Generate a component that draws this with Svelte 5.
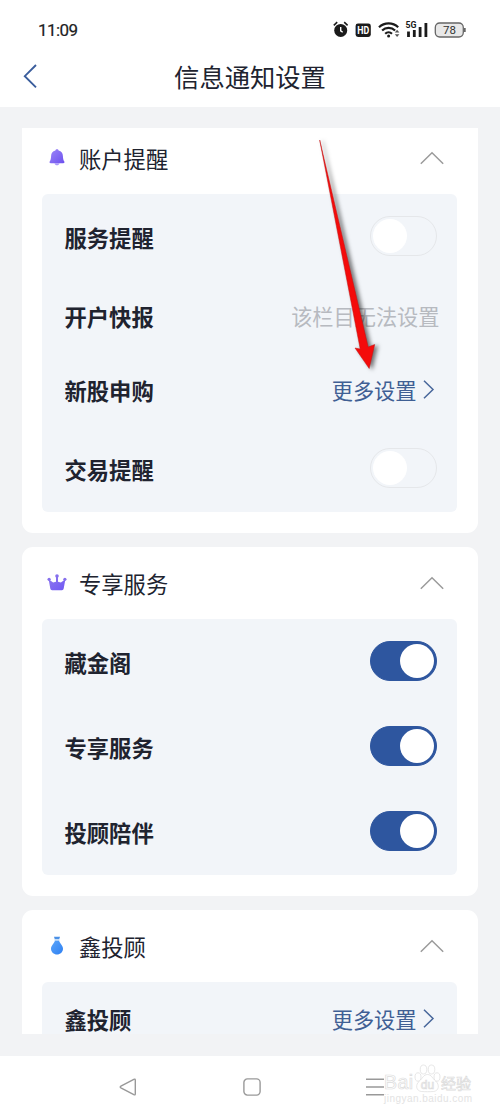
<script>
  const sections = [
    {
      icon: 'bell',
      title: '账户提醒',
      rows: [
        { label: '服务提醒', kind: 'toggle', on: false },
        { label: '开户快报', kind: 'locked' },
        { label: '新股申购', kind: 'more' },
        { label: '交易提醒', kind: 'toggle', on: false },
      ],
    },
    {
      icon: 'crown',
      title: '专享服务',
      rows: [
        { label: '藏金阁', kind: 'toggle', on: true },
        { label: '专享服务', kind: 'toggle', on: true },
        { label: '投顾陪伴', kind: 'toggle', on: true },
      ],
    },
    {
      icon: 'pouch',
      title: '鑫投顾',
      rows: [{ label: '鑫投顾', kind: 'more' }],
    },
  ];
</script>

<div class="screen">
  <div class="status">
    <span class="time">11:09</span>
    <svg class="indicators" width="136" height="24" viewBox="0 0 136 24">
      <g fill="#1b1b1b">
        <circle cx="8.7" cy="13.4" r="6.5" />
        <path d="M1.800 8.300 5.200 5.200M12.200 5.200l3.400 3.100" stroke="#1b1b1b" stroke-width="1.600" fill="none" />
        <path d="M8.700 10v3.800l2 1.400" stroke="#fff" stroke-width="1.400" fill="none" />
        <rect x="23.600" y="6.500" width="15.200" height="13.500" rx="2.400" />
      </g>
      <text x="31.200" y="17.200" text-anchor="middle" font-size="10.500" font-weight="700" textLength="12" lengthAdjust="spacingAndGlyphs" fill="#fff">HD</text>
      <g fill="none" stroke="#1b1b1b" stroke-width="2.200">
        <path d="M47 10.200a14 14 0 0 1 19.200 0" />
        <path d="M50.100 13.500a9.300 9.300 0 0 1 13 0" />
        <path d="M53.200 16.700a5 5 0 0 1 6.800 0" />
      </g>
      <circle cx="56.600" cy="19" r="1.500" fill="#1b1b1b" />
      <path d="M62.800 15.400l2.300-2.600 2.300 2.600zM62.800 17.300l2.300 2.600 2.300-2.600z" fill="#555" />
      <text x="73.500" y="11.300" font-size="9" font-weight="700" textLength="11" lengthAdjust="spacingAndGlyphs" fill="#1b1b1b">5G</text>
      <path d="M76.500 14.500V20M82.300 13v7M88.100 10v10M93.900 6v14" stroke="#1b1b1b" stroke-width="2.800" />
      <rect x="103.300" y="6" width="28" height="14" rx="4.400" fill="#e8e8e8" stroke="#666" stroke-width="1.300" />
      <path d="M132.800 11v4" stroke="#666" stroke-width="1.800" />
      <text x="117.400" y="17.300" text-anchor="middle" font-size="11.500" fill="#333">78</text>
    </svg>
  </div>

  <header>
    <svg class="back" width="16" height="26" viewBox="0 0 16 26" fill="none" stroke="#3a5d9c" stroke-width="1.900">
      <path d="M14 2 2.800 13.200 14 24.400" />
    </svg>
    <h1>信息通知设置</h1>
  </header>

  <main>
    <div class="scroll">
      {#each sections as section}
        <section class="card">
          <div class="head">
            {#if section.icon === 'bell'}
              <svg class="icon" width="20" height="20" viewBox="0 0 20 20">
                <defs>
                  <linearGradient id="bell" x1="0" y1="0" x2="1" y2="1">
                    <stop offset="0" stop-color="#9c86f8" />
                    <stop offset="1" stop-color="#6c50ee" />
                  </linearGradient>
                </defs>
                <path d="M10 1.300c.9 0 1.400.5 1.600 1.100 2.900.7 4.200 2.800 4.300 5.500.1 2.700.5 4.200 1.300 5.400.6 1 .2 2-1 2H3.800c-1.200 0-1.600-1-1-2 .8-1.200 1.200-2.700 1.300-5.400.1-2.700 1.400-4.800 4.300-5.500.2-.6.7-1.100 1.600-1.100z" fill="url(#bell)" />
                <path d="M7.500 15.300h5c-.4 1.400-1.300 2-2.500 2s-2.100-.6-2.500-2z" fill="#a998fa" />
              </svg>
            {:else if section.icon === 'crown'}
              <svg class="icon" width="20" height="20" viewBox="0 0 20 20">
                <defs>
                  <linearGradient id="crown" x1="0" y1="0" x2="1" y2="1">
                    <stop offset="0" stop-color="#8e78ee" />
                    <stop offset="1" stop-color="#7058f4" />
                  </linearGradient>
                </defs>
                <path d="M1.600 6.300 6.100 9.600 9 8.800V3.500h2v5.300l2.900.8 4.500-3.300-1.700 9.200q-.2 1.700-1.800 1.700H5.100q-1.600 0-1.800-1.700z" fill="url(#crown)" />
                <g fill="#8670ec">
                  <circle cx="10" cy="3" r="1.800" />
                  <circle cx="2.100" cy="6.300" r="1.600" />
                  <circle cx="17.900" cy="6.300" r="1.600" />
                </g>
              </svg>
            {:else}
              <svg class="icon" width="20" height="20" viewBox="0 0 20 20">
                <defs>
                  <linearGradient id="pouch" x1="0" y1="0" x2="1" y2="1">
                    <stop offset="0" stop-color="#5aa5fa" />
                    <stop offset="1" stop-color="#2f80f2" />
                  </linearGradient>
                </defs>
                <path d="M7 .8h6l-.8 2.500H7.800z" fill="#4b91e6" />
                <path d="M7.500 3.300h5v1.500h-5z" fill="#bcd9fb" />
                <path d="M8 4.700h4c.7 2.300 4 4.800 4 8 0 3.300-2.900 5.800-6 5.800s-6-2.500-6-5.800c0-3.200 3.300-5.700 4-8z" fill="url(#pouch)" />
              </svg>
            {/if}
            <h2>{section.title}</h2>
            <svg class="collapse" width="24" height="14" viewBox="0 0 24 14" fill="none" stroke="#9b9b9b" stroke-width="1.500">
              <path d="M.8 12.800 12 1.800l11.200 11" />
            </svg>
          </div>
          <div class="panel">
            {#each section.rows as row}
              <div class="row {row.kind}">
                <span class="label">{row.label}</span>
                {#if row.kind === 'toggle'}
                  <span class="switch" class:on={row.on}><i></i></span>
                {:else if row.kind === 'locked'}
                  <span class="note">该栏目无法设置</span>
                {:else}
                  <span class="link">
                    更多设置
                    <svg width="12" height="20" viewBox="0 0 12 20" fill="none" stroke="#48679b" stroke-width="1.500">
                      <path d="M1 1.700 10 10.500 1 19.300" />
                    </svg>
                  </span>
                {/if}
              </div>
            {/each}
          </div>
        </section>
      {/each}
    </div>
  </main>

  <nav>
    <svg width="18" height="18" viewBox="0 0 18 18"><path d="M1.900 8.200 14.800 1.300q1.500-.7 1.500 1v13.400q0 1.700-1.500 1L1.900 9.800q-1.400-.8 0-1.600z" /></svg>
    <svg width="18" height="18" viewBox="0 0 18 18"><rect x=".9" y=".9" width="16.200" height="16.200" rx="3.500" /></svg>
    <svg width="18" height="18" viewBox="0 0 18 18"><path d="M0 1.300h18M0 9h18M0 16.700h18" /></svg>
  </nav>

  <svg class="arrow" width="80" height="240" viewBox="0 0 80 240">
    <path d="M7.700 2 48.200 211 43 210 57.200 230.500 62.700 206.500 56.200 209z" fill="#f40b0b" stroke="#c01212" stroke-width=".5" />
  </svg>

  <svg class="watermark" width="96" height="48" viewBox="0 0 96 48">
    <g fill="#fff" stroke="#dcdcdc" stroke-width=".7">
      <text x="1" y="29" font-size="19.500" textLength="29">Bai</text>
      <ellipse cx="35" cy="17" rx="3" ry="4.200" />
      <ellipse cx="40.500" cy="9.500" rx="3.300" ry="4.500" />
      <ellipse cx="48.500" cy="9.500" rx="3.300" ry="4.500" />
      <ellipse cx="54" cy="17" rx="3" ry="4.200" />
      <path d="M44.500 14.500c4 0 5 4 8 6.500 4.500 3.500 3.500 10-2 10.500-3 .3-9 .3-12 0-5.500-.5-6.500-7-2-10.500 3-2.500 4-6.500 8-6.500z" />
      <text x="37.800" y="28.500" font-size="12">du</text>
      <text class="cjk" x="58" y="28.500" font-size="15">经验</text>
    </g>
    <text x="1" y="42" font-size="10" textLength="88" fill="#e3e3e3">jingyan.baidu.com</text>
  </svg>
</div>

<style>
  :global(body) {
    margin: 0;
  }
  .screen {
    position: relative;
    display: flex;
    flex-direction: column;
    width: 500px;
    height: 1118px;
    overflow: hidden;
    background: #fff;
    color: #20232f;
    font-family: 'Noto Sans CJK SC', sans-serif;
  }
  h1,
  h2 {
    margin: 0;
    font-weight: 400;
  }
  .status {
    display: flex;
    align-items: center;
    justify-content: space-between;
    box-sizing: border-box;
    height: 46px;
    padding: 14px 32px 0 38px;
    font-family: Roboto, sans-serif;
  }
  .time {
    font-size: 17px;
    letter-spacing: -0.6px;
    color: #1d1d1d;
    -webkit-text-stroke: 0.2px #1d1d1d;
  }
  .indicators {
    margin-top: -12px;
    transform: translateY(5px);
  }
  header {
    display: grid;
    grid-template-columns: 1fr auto 1fr;
    align-items: center;
    height: 61px;
    padding: 0 22px;
  }
  .back {
    margin-top: -2px;
  }
  h1 {
    margin-top: -2px;
    font-size: 25.3px;
    line-height: 58px;
  }
  main {
    box-sizing: border-box;
    height: 949px;
    padding: 21px 22px 22px;
    background: #f2f3f5;
  }
  .scroll {
    height: 906px;
    overflow: hidden;
  }
  .card {
    box-sizing: border-box;
    margin-bottom: 14.5px;
    padding: 0 21px 21px 20px;
    border-radius: 11px;
    background: #fff;
  }
  .card:first-child {
    margin-top: -6px;
    border-radius: 0 0 11px 11px;
  }
  .head {
    display: flex;
    align-items: center;
    height: 72px;
    padding: 0 13px 0 5px;
  }
  .icon {
    margin-right: 12px;
  }
  h2 {
    margin-top: -1px;
    font-size: 22.3px;
    line-height: 32px;
  }
  .collapse {
    margin-left: auto;
  }
  .panel {
    border-radius: 6px;
    background: #f2f5f9;
  }
  .row {
    display: flex;
    align-items: center;
    justify-content: space-between;
    height: 85.3px;
    padding: 0 20px 0 22.5px;
  }
  .row.locked {
    height: 74px;
    padding-right: 17.5px;
  }
  .row.more {
    height: 73px;
  }
  .label {
    font-size: 22.3px;
    font-weight: 700;
  }
  .note {
    margin-top: -1px;
    font-size: 21.2px;
    color: #b7bac0;
  }
  .link {
    display: flex;
    align-items: center;
    gap: 6px;
    margin-top: -1px;
    padding-right: 2.5px;
    font-size: 21.2px;
    color: #3f5f94;
  }
  .switch {
    display: flex;
    align-items: center;
    box-sizing: border-box;
    width: 67px;
    height: 40px;
    margin-top: -2px;
    padding: 2px;
    border: 1px solid #e5e7ea;
    border-radius: 20px;
  }
  .switch i {
    width: 34px;
    height: 34px;
    border-radius: 50%;
    background: #fff;
  }
  .switch.on {
    justify-content: flex-end;
    border-color: #2e569f;
    background: #2e569f;
  }
  nav {
    display: flex;
    align-items: center;
    justify-content: space-between;
    height: 62px;
    padding: 0 116px 0 119px;
  }
  nav svg {
    fill: none;
    stroke: #999;
    stroke-width: 1.4;
  }
  .arrow {
    position: absolute;
    left: 312px;
    top: 138px;
    filter: drop-shadow(3px 1px 2px rgba(0, 0, 0, 0.55));
  }
  .watermark {
    position: absolute;
    left: 383px;
    top: 1060px;
    font-family: 'Liberation Sans', sans-serif;
  }
  .cjk {
    font-family: 'Noto Sans CJK SC', sans-serif;
  }
</style>
